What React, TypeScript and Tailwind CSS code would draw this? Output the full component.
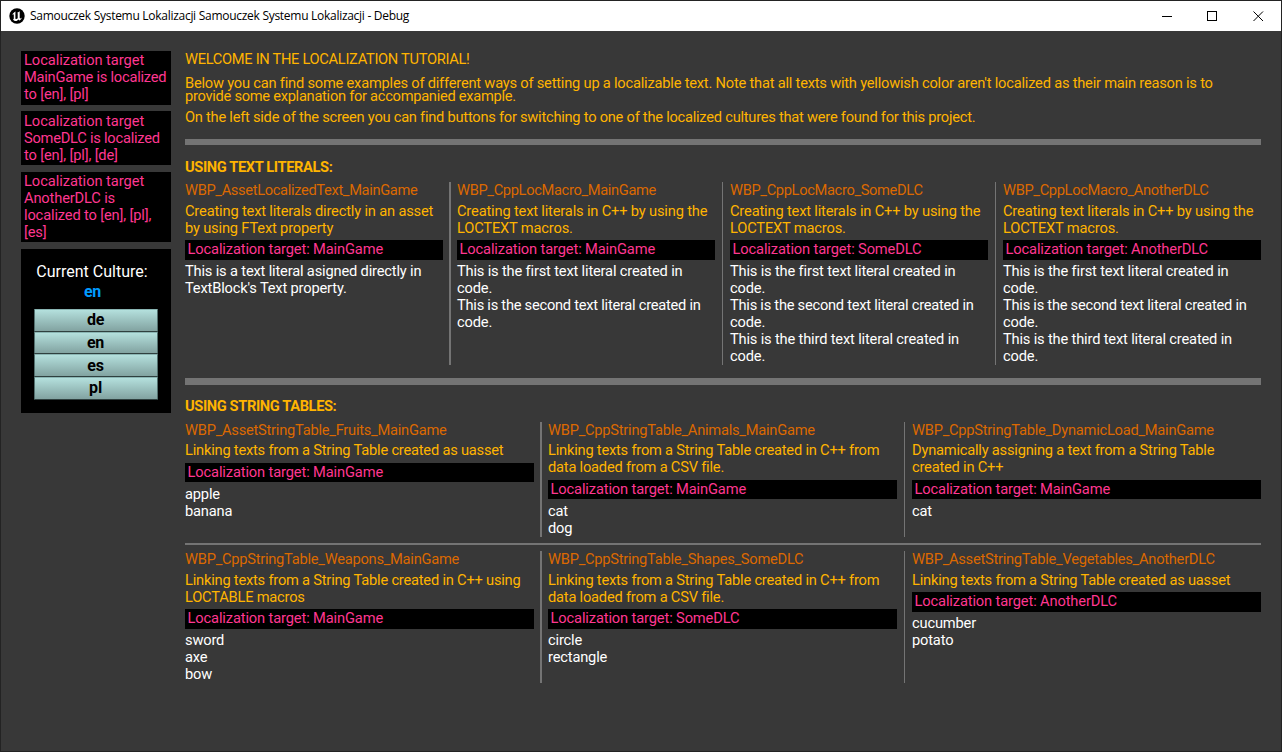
import React from "react";

type Card = {
  name: string;
  desc: string[];
  target: string;
  body: string[];
};

const literals: Card[] = [
  {
    name: "WBP_AssetLocalizedText_MainGame",
    desc: ["Creating text literals directly in an asset", "by using FText property"],
    target: "MainGame",
    body: ["This is a text literal asigned directly in", "TextBlock's Text property."],
  },
  {
    name: "WBP_CppLocMacro_MainGame",
    desc: ["Creating text literals in C++ by using the", "LOCTEXT macros."],
    target: "MainGame",
    body: ["This is the first text literal created in", "code.", "This is the second text literal created in", "code."],
  },
  {
    name: "WBP_CppLocMacro_SomeDLC",
    desc: ["Creating text literals in C++ by using the", "LOCTEXT macros."],
    target: "SomeDLC",
    body: [
      "This is the first text literal created in",
      "code.",
      "This is the second text literal created in",
      "code.",
      "This is the third text literal created in",
      "code.",
    ],
  },
  {
    name: "WBP_CppLocMacro_AnotherDLC",
    desc: ["Creating text literals in C++ by using the", "LOCTEXT macros."],
    target: "AnotherDLC",
    body: [
      "This is the first text literal created in",
      "code.",
      "This is the second text literal created in",
      "code.",
      "This is the third text literal created in",
      "code.",
    ],
  },
];

const tablesTop: Card[] = [
  {
    name: "WBP_AssetStringTable_Fruits_MainGame",
    desc: ["Linking texts from a String Table created as uasset"],
    target: "MainGame",
    body: ["apple", "banana"],
  },
  {
    name: "WBP_CppStringTable_Animals_MainGame",
    desc: ["Linking texts from a String Table created in C++ from", "data loaded from a CSV file."],
    target: "MainGame",
    body: ["cat", "dog"],
  },
  {
    name: "WBP_CppStringTable_DynamicLoad_MainGame",
    desc: ["Dynamically assigning a text from a String Table", "created in C++"],
    target: "MainGame",
    body: ["cat"],
  },
];

const tablesBottom: Card[] = [
  {
    name: "WBP_CppStringTable_Weapons_MainGame",
    desc: ["Linking texts from a String Table created in C++ using", "LOCTABLE macros"],
    target: "MainGame",
    body: ["sword", "axe", "bow"],
  },
  {
    name: "WBP_CppStringTable_Shapes_SomeDLC",
    desc: ["Linking texts from a String Table created in C++ from", "data loaded from a CSV file."],
    target: "SomeDLC",
    body: ["circle", "rectangle"],
  },
  {
    name: "WBP_AssetStringTable_Vegetables_AnotherDLC",
    desc: ["Linking texts from a String Table created as uasset"],
    target: "AnotherDLC",
    body: ["cucumber", "potato"],
  },
];

function Lines({ items }: { items: string[] }) {
  return (
    <>
      {items.map((line, i) => (
        <p key={i} className={line.includes("second") ? "tracking-[-0.25px]" : undefined}>
          {line}
        </p>
      ))}
    </>
  );
}

function CardView({ card, tight, nameClass, descClass }: { card: Card; tight?: boolean; nameClass: string; descClass: string }) {
  return (
    <article className="whitespace-nowrap">
      <h3 className={"text-[#dc6900] " + nameClass}>{card.name}</h3>
      <div className={(tight ? "mt-[3px] " : "mt-1 ") + "text-[#ffb400] " + descClass}>
        <Lines items={card.desc} />
      </div>
      <div
        className={
          (tight ? "mt-1 mb-1 h-[19px]" : "my-[3px] h-5") +
          " bg-black pt-px pl-[2.5px] tracking-[-0.13px] text-[#ff3791]"
        }
      >
        Localization target: {card.target}
      </div>
      <div className="tracking-[-0.17px] text-white">
        <Lines items={card.body} />
      </div>
    </article>
  );
}

type RowProps = {
  cards: Card[];
  tight?: boolean;
  nameClass: string;
  descClass: string;
  cellClass: string;
  className: string;
};

function CardRow({ cards, tight, nameClass, descClass, cellClass, className }: RowProps) {
  return (
    <div className={"flex " + className}>
      {cards.map((card, i) => (
        <React.Fragment key={card.name}>
          {i === 1 && <div className="mx-1.5 w-0.5 shrink-0 bg-[#747474]" />}
          {i > 1 && <div className="mx-[7px] w-px shrink-0 bg-[#747474]" />}
          <div className={"shrink-0 " + cellClass}>
            <CardView card={card} tight={tight} nameClass={nameClass} descClass={descClass} />
          </div>
        </React.Fragment>
      ))}
    </div>
  );
}

function TitleBar() {
  return (
    <header className="flex h-[30px] shrink-0 items-center bg-white pr-[17px] pl-2 text-black">
      <svg viewBox="0 0 16 16" className="size-4">
        <circle cx="8" cy="8" r="7.700" fill="#000" />
        <path
          d="M3 7.200C3.700 5.500 5.100 4.200 7 3.600c-.5.4-.6.8-.6 1.300v5.300c0 .6.3.9.8.9.6 0 1.100-.3 1.500-.8V5.500c0-.4-.2-.6-.6-.8C9.100 4.300 10 3.900 11 2.900c-.2.6-.3 1.100-.3 1.700v5.100c0 .5.2.8.6.8.500 0 1.100-.4 1.600-1-.4 1.400-1.300 2.400-2.400 3l-1.100-1c-.6.9-1.500 1.500-2.600 1.500-1.400 0-2.400-.8-2.800-1.800.5.100.8-.1.8-.6V7c0-.5-.2-.8-.6-.8-.4 0-.8.400-1.200 1z"
          fill="#fff"
        />
      </svg>
      <h1 className="ml-[5px] font-['Open_Sans',sans-serif] text-[12px] leading-4 tracking-[-0.28px] whitespace-nowrap">
        Samouczek Systemu Lokalizacji Samouczek Systemu Lokalizacji - Debug
      </h1>
      <div className="ml-auto flex items-center gap-[35px]">
        <svg viewBox="0 0 11 11" className="size-[11px]" shapeRendering="crispEdges">
          <path d="M1 5h10v1H1z" />
        </svg>
        <svg viewBox="0 0 11 11" className="size-[11px]" fill="none" stroke="#000" shapeRendering="crispEdges">
          <path d="M.5.5h9v9h-9z" />
        </svg>
        <svg viewBox="0 0 11 11" className="size-[11px]" fill="none" stroke="#000">
          <path d="M.5.500l9.500 9.500M10 .5L.5 10" />
        </svg>
      </div>
    </header>
  );
}

function Sidebar() {
  return (
    <aside className="w-[150px] shrink-0 whitespace-nowrap text-[#ff3791]">
      <div className="h-[54px] bg-black pt-px pl-[3px] tracking-[-0.05px]">
        <p>Localization target</p>
        <p className="tracking-[-0.24px]">MainGame is localized</p>
        <p className="tracking-[-0.15px]">to [en], [pl]</p>
      </div>
      <div className="mt-1.5 h-[54px] bg-black pt-[1.5px] pl-[3px] tracking-[-0.05px]">
        <p>Localization target</p>
        <p className="tracking-[-0.24px]">SomeDLC is localized</p>
        <p className="tracking-[-0.15px]">to [en], [pl], [de]</p>
      </div>
      <div className="mt-[7px] h-[70px] bg-black pt-px pl-[3px] tracking-[-0.05px]">
        <p>Localization target</p>
        <p className="tracking-[-0.15px]">AnotherDLC is</p>
        <p className="tracking-[-0.15px]">localized to [en], [pl],</p>
        <p className="tracking-[-0.15px]">[es]</p>
      </div>
      <div className="mt-[7px] h-[164px] bg-black px-[13px] pt-[13px] text-center text-base leading-5">
        <p className="pr-2 text-white">Current Culture:</p>
        <p className="pr-[7px] font-bold tracking-[-0.3px] text-[#009bff]">en</p>
        <div className="mt-[7px] flex flex-col text-black">
          {["de", "en", "es", "pl"].map((c) => (
            <button
              key={c}
              className="h-[22.670px] w-full rounded-[1px] border border-t-[#8ab5b3] border-r-[#53706f] border-b-[#2f403f] border-l-[#53706f] bg-linear-to-b from-[#b4e0dd] to-[#82a3a1] pr-px font-bold leading-5 tracking-[-0.2px]"
            >
              {c}
            </button>
          ))}
        </div>
      </div>
    </aside>
  );
}

export default function App() {
  return (
    <div className="flex h-[752px] w-[1282px] flex-col overflow-hidden border border-[#232323] bg-[#383838] font-[Roboto,sans-serif] text-[14.670px] leading-[17px]">
      <TitleBar />
      <div className="flex gap-3.5 px-5 pt-5">
        <Sidebar />
        <main className="w-[1076px] text-[#ffb400]">
          <p className="tracking-[-0.31px] whitespace-nowrap">WELCOME IN THE LOCALIZATION TUTORIAL!</p>
          <div className="mt-[9px] leading-[13px] whitespace-nowrap">
            <p className="tracking-[-0.211px]">
              Below you can find some examples of different ways of setting up a localizable text. Note that all texts
              with yellowish color aren't localized as their main reason is to
            </p>
            <p className="tracking-[-0.28px]">provide some explanation for accompanied example.</p>
          </div>
          <p className="mt-[6px] tracking-[-0.247px] whitespace-nowrap">
            On the left side of the screen you can find buttons for switching to one of the localized cultures that
            were found for this project.
          </p>
          <div className="mt-[13px] h-1.5 bg-[#747474]" />
          <h2 className="mt-[14px] font-bold tracking-[-0.39px]">USING TEXT LITERALS:</h2>
          <CardRow
            cards={literals}
            nameClass="tracking-[-0.34px]"
            descClass="tracking-[-0.17px]"
            cellClass="w-[258px]"
            className="mt-1.5 h-[183px]"
          />
          <div className="mt-[13px] h-[7px] bg-[#747474]" />
          <h2 className="mt-[13px] font-bold tracking-[-0.39px]">USING STRING TABLES:</h2>
          <CardRow
            cards={tablesTop}
            tight
            nameClass="tracking-[-0.24px]"
            descClass="tracking-[-0.21px]"
            cellClass="w-[349px]"
            className="mt-[7px] h-[115px]"
          />
          <div className="my-1.5 h-0.5 bg-[#747474]" />
          <CardRow
            cards={tablesBottom}
            nameClass="tracking-[-0.25px]"
            descClass="tracking-[-0.21px]"
            cellClass="w-[349px]"
            className="h-[132px]"
          />
        </main>
      </div>
    </div>
  );
}
